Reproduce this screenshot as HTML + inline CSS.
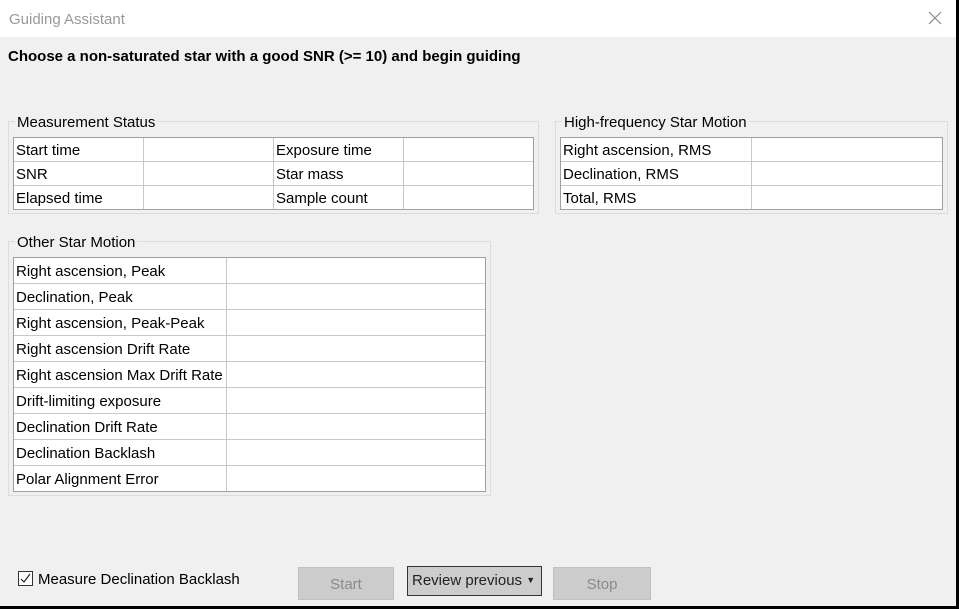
<!DOCTYPE html>
<html><head><style>
*{margin:0;padding:0;box-sizing:border-box}
body{width:959px;height:609px;background:#000;position:relative;overflow:hidden;font-family:"Liberation Sans",sans-serif;font-size:15px;color:#000}
.dlg{position:absolute;left:0;top:0;width:956px;height:606px;background:#f0f0f0}
.title{position:absolute;left:0;top:0;width:956px;height:37px;background:#fff}
.title span{position:absolute;left:9px;top:11px;color:#999;font-size:15px}
.x{position:absolute;left:928px;top:11px}
.hdr{position:absolute;left:8px;top:48px;font-weight:bold;font-size:15px}
.grp{position:absolute;border:1px solid #dcdcdc}
.gl{position:absolute;background:#f0f0f0;padding:0 2px;font-size:15px;line-height:16px}
table{position:absolute;border-collapse:collapse;background:#fff;table-layout:fixed}
td{border:1px solid #c8c8c8;padding:2px 0 0 2px;font-size:15px;white-space:nowrap;overflow:hidden}
table{outline:1px solid #a0a0a0;outline-offset:-1px}
.btn{position:absolute;background:#cccccc;border:1px solid #c0c0c0;color:#8a8a8a;text-align:center;font-size:15px}
</style></head><body>
<div class="dlg">
<div class="title"><span>Guiding Assistant</span>
<svg class="x" width="14" height="14"><path d="M1 1L13 13M13 1L1 13" stroke="#888" stroke-width="1.2"/></svg></div>
<div class="hdr">Choose a non-saturated star with a good SNR (&gt;= 10) and begin guiding</div>

<div class="grp" style="left:8px;top:121px;width:531px;height:93px"></div>
<div class="gl" style="left:15px;top:115px">Measurement Status</div>
<table style="left:13px;top:137px;width:521px">
<tr style="height:24px"><td style="width:130px">Start time</td><td style="width:130px"></td><td style="width:130px">Exposure time</td><td></td></tr>
<tr style="height:24px"><td>SNR</td><td></td><td>Star mass</td><td></td></tr>
<tr style="height:24px"><td>Elapsed time</td><td></td><td>Sample count</td><td></td></tr>
</table>

<div class="grp" style="left:555px;top:121px;width:393px;height:93px"></div>
<div class="gl" style="left:562px;top:115px">High-frequency Star Motion</div>
<table style="left:560px;top:137px;width:383px">
<tr style="height:24px"><td style="width:191px">Right ascension, RMS</td><td></td></tr>
<tr style="height:24px"><td>Declination, RMS</td><td></td></tr>
<tr style="height:24px"><td>Total, RMS</td><td></td></tr>
</table>

<div class="grp" style="left:8px;top:241px;width:483px;height:255px"></div>
<div class="gl" style="left:15px;top:235px">Other Star Motion</div>
<table style="left:13px;top:257px;width:473px">
<tr style="height:26px"><td style="width:213px">Right ascension, Peak</td><td></td></tr>
<tr style="height:26px"><td>Declination, Peak</td><td></td></tr>
<tr style="height:26px"><td>Right ascension, Peak-Peak</td><td></td></tr>
<tr style="height:26px"><td>Right ascension Drift Rate</td><td></td></tr>
<tr style="height:26px"><td>Right ascension Max Drift Rate</td><td></td></tr>
<tr style="height:26px"><td>Drift-limiting exposure</td><td></td></tr>
<tr style="height:26px"><td>Declination Drift Rate</td><td></td></tr>
<tr style="height:26px"><td>Declination Backlash</td><td></td></tr>
<tr style="height:26px"><td>Polar Alignment Error</td><td></td></tr>
</table>

<div style="position:absolute;left:18px;top:571px;width:15px;height:15px;border:1px solid #333;background:#fff">
<svg width="13" height="13" style="position:absolute;left:0;top:0"><path d="M2 7L5 10L11 2" stroke="#222" stroke-width="1.2" fill="none"/></svg></div>
<div style="position:absolute;left:38px;top:571px">Measure Declination Backlash</div>

<div class="btn" style="left:298px;top:567px;width:96px;height:33px;line-height:33px">Start</div>
<div class="btn" style="left:407px;top:566px;width:135px;height:30px;line-height:28px;border:1px solid #333;color:#222;text-align:left;padding-left:4px">Review previous <span style="font-size:9px;position:relative;top:-2px">&#9660;</span></div>
<div class="btn" style="left:553px;top:567px;width:98px;height:33px;line-height:33px">Stop</div>
</div>
</body></html>
